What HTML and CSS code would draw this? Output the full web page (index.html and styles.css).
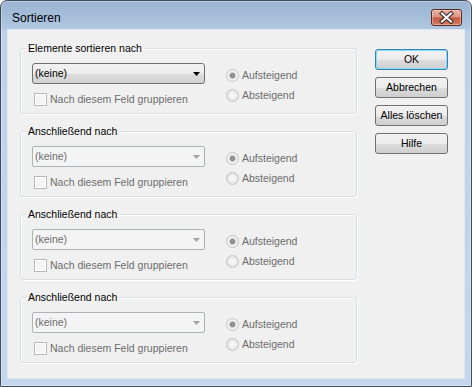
FILE: index.html
```html
<!DOCTYPE html>
<html lang="de">
<head>
    <meta charset="UTF-8">
    <meta name="viewport" content="width=device-width, initial-scale=1.0">
    <title>Sortieren</title>
    <link rel="stylesheet" href="styles.css">
</head>
<body>
    <div class="window">
        <div class="titlebar">
            <span class="title">Sortieren</span>
            <button class="close" title="Schließen">
                <svg width="29" height="15" viewBox="0 0 29 15">
                    <path d="M10 3.5 L19 11.5 M19 3.5 L10 11.5" stroke="#3a2420" stroke-width="4.2" stroke-linecap="square" fill="none"/>
                    <path d="M10 3.5 L19 11.5 M19 3.5 L10 11.5" stroke="#ffffff" stroke-width="2.2" stroke-linecap="square" fill="none"/>
                </svg>
            </button>
        </div>

        <div class="client">
            <div class="groups">
                <fieldset class="group">
                    <legend>Elemente sortieren nach</legend>
                    <div class="group-row">
                        <div class="field-col">
                            <div class="combo">
                                <span>(keine)</span>
                                <svg class="arrow" width="7" height="4" viewBox="0 0 7 4"><polygon points="0,0 7,0 3.5,4" fill="#000"/></svg>
                            </div>
                            <label class="check"><span class="box"></span>Nach diesem Feld gruppieren</label>
                        </div>
                        <div class="order-col">
                            <label class="option"><span class="radio checked"></span>Aufsteigend</label>
                            <label class="option"><span class="radio"></span>Absteigend</label>
                        </div>
                    </div>
                </fieldset>

                <fieldset class="group">
                    <legend>Anschließend nach</legend>
                    <div class="group-row">
                        <div class="field-col">
                            <div class="combo disabled">
                                <span>(keine)</span>
                                <svg class="arrow" width="7" height="4" viewBox="0 0 7 4"><polygon points="0,0 7,0 3.5,4" fill="#a3a3a3"/></svg>
                            </div>
                            <label class="check"><span class="box"></span>Nach diesem Feld gruppieren</label>
                        </div>
                        <div class="order-col">
                            <label class="option"><span class="radio checked"></span>Aufsteigend</label>
                            <label class="option"><span class="radio"></span>Absteigend</label>
                        </div>
                    </div>
                </fieldset>

                <fieldset class="group">
                    <legend>Anschließend nach</legend>
                    <div class="group-row">
                        <div class="field-col">
                            <div class="combo disabled">
                                <span>(keine)</span>
                                <svg class="arrow" width="7" height="4" viewBox="0 0 7 4"><polygon points="0,0 7,0 3.5,4" fill="#a3a3a3"/></svg>
                            </div>
                            <label class="check"><span class="box"></span>Nach diesem Feld gruppieren</label>
                        </div>
                        <div class="order-col">
                            <label class="option"><span class="radio checked"></span>Aufsteigend</label>
                            <label class="option"><span class="radio"></span>Absteigend</label>
                        </div>
                    </div>
                </fieldset>

                <fieldset class="group">
                    <legend>Anschließend nach</legend>
                    <div class="group-row">
                        <div class="field-col">
                            <div class="combo disabled">
                                <span>(keine)</span>
                                <svg class="arrow" width="7" height="4" viewBox="0 0 7 4"><polygon points="0,0 7,0 3.5,4" fill="#a3a3a3"/></svg>
                            </div>
                            <label class="check"><span class="box"></span>Nach diesem Feld gruppieren</label>
                        </div>
                        <div class="order-col">
                            <label class="option"><span class="radio checked"></span>Aufsteigend</label>
                            <label class="option"><span class="radio"></span>Absteigend</label>
                        </div>
                    </div>
                </fieldset>
            </div>

            <div class="actions">
                <button class="btn default">OK</button>
                <button class="btn">Abbrechen</button>
                <button class="btn">Alles löschen</button>
                <button class="btn">Hilfe</button>
            </div>
        </div>
    </div>
</body>
</html>
```

FILE: styles.css
```css
body {
    margin: 0;
    padding: 0;
    background-color: #ffffff;
    font-family: "Liberation Sans", Arial, sans-serif;
    font-size: 10.5px;
    color: #000000;
}
.window {
    box-sizing: border-box;
    width: 472px;
    height: 387px;
    padding: 0 7px 8px 7px;
    border: 1px solid #3e4b5b;
    border-radius: 7px 7px 0 0;
    background: linear-gradient(to bottom, #9ab3d1 0, #b2c8e2 29px, #bdd2e9 30px, #c2d6ec 100%);
    box-shadow: inset 0 0 0 1px rgba(255, 255, 255, 0.35);
}
.titlebar {
    display: flex;
    justify-content: space-between;
    align-items: flex-start;
    height: 29px;
}
.title {
    padding: 10px 0 0 4px;
    font-size: 12px;
    line-height: 15px;
    color: #000000;
}
.close {
    box-sizing: border-box;
    width: 31px;
    height: 17px;
    margin: 8px 2px 0 0;
    padding: 0;
    display: flex;
    align-items: center;
    justify-content: center;
    border: 1px solid #5b2a23;
    border-radius: 3px;
    background: linear-gradient(to bottom, #e9b1a4 0%, #dc9583 45%, #c65a44 52%, #d47c62 100%);
    box-shadow: inset 0 0 0 1px rgba(255, 220, 210, 0.45);
}
.client {
    box-sizing: border-box;
    height: 348px;
    display: flex;
    gap: 18px;
    padding: 12px 0 0 12px;
    background-color: #f0f0f0;
    box-shadow: 0 0 0 1px #dde8f4;
}
.groups {
    display: flex;
    flex-direction: column;
    gap: 11px;
    width: 337px;
}
.group {
    margin: 0;
    padding: 8px 11px 7px 11px;
    min-inline-size: 0;
    border: 1px solid #d5dfe5;
    border-radius: 3px;
    box-shadow: inset 1px 1px 0 #ffffff, 1px 1px 0 #ffffff;
}
.group legend {
    margin-left: -6px;
    padding: 0 2px;
    line-height: 13px;
}
.group-row {
    display: flex;
    gap: 21px;
}
.field-col {
    display: flex;
    flex-direction: column;
    gap: 9px;
    width: 173px;
}
.combo {
    box-sizing: border-box;
    height: 21px;
    display: flex;
    align-items: center;
    justify-content: space-between;
    padding: 0 4px 0 2px;
    line-height: 13px;
    border: 1px solid #707070;
    border-radius: 3px;
    background: linear-gradient(to bottom, #f2f2f2 0%, #ebebeb 50%, #dddddd 51%, #d3d3d3 100%);
}
.combo.disabled {
    color: #6d6d6d;
    border-color: #adb2b5;
    border-radius: 2px;
    background: #f4f4f4;
}
.check {
    display: flex;
    align-items: center;
    gap: 3px;
    margin-left: 2px;
    height: 13px;
    line-height: 13px;
    color: #6d6d6d;
}
.box {
    box-sizing: border-box;
    width: 13px;
    height: 13px;
    border: 1px solid #b9b9b9;
    background: #f4f4f4;
    box-shadow: inset 0 0 0 1px #ffffff;
}
.order-col {
    display: flex;
    flex-direction: column;
    gap: 7px;
    padding-top: 6px;
}
.option {
    display: flex;
    align-items: center;
    gap: 3px;
    height: 13px;
    line-height: 13px;
    color: #6d6d6d;
}
.radio {
    box-sizing: border-box;
    width: 13px;
    height: 13px;
    border: 1px solid #c6c6c6;
    border-radius: 50%;
    background: radial-gradient(circle at 50% 50%, #fafafa 0, #ececec 4px, #dcdcdc 6px);
}
.radio.checked {
    background: radial-gradient(circle at 50% 50%, #9a9a9a 0, #8a8a8a 2.2px, #c4c4c4 2.8px, #e8e8e8 3.6px, #f6f6f6 4.5px, #e2e2e2 6px);
}
.actions {
    display: flex;
    flex-direction: column;
    gap: 7px;
    padding-top: 7px;
}
.btn {
    box-sizing: border-box;
    width: 73px;
    height: 21px;
    padding: 0;
    font-family: "Liberation Sans", Arial, sans-serif;
    font-size: 10.5px;
    line-height: 13px;
    color: #000000;
    border: 1px solid #707070;
    border-radius: 3px;
    background: linear-gradient(to bottom, #f2f2f2 0%, #ebebeb 50%, #dddddd 51%, #cfcfcf 100%);
}
.btn.default {
    border-color: #3c7fb1;
    box-shadow: inset 0 0 0 1px #7ee0fb;
}
```
